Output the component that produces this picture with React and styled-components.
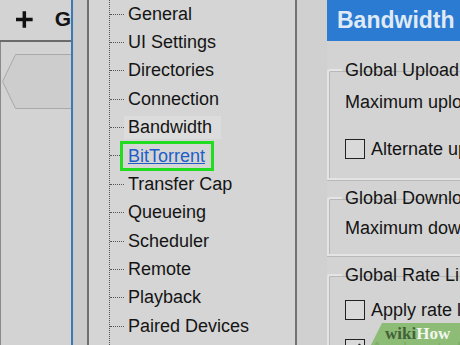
import React from 'react';
import styled, { createGlobalStyle } from 'styled-components';

const treeItems = [
  'General',
  'UI Settings',
  'Directories',
  'Connection',
  'Bandwidth',
  'BitTorrent',
  'Transfer Cap',
  'Queueing',
  'Scheduler',
  'Remote',
  'Playback',
  'Paired Devices',
];

const GlobalStyle = createGlobalStyle`
  html, body {
    margin: 0;
    padding: 0;
    background: #d3d3d3;
  }
  body {
    font-family: 'Liberation Sans', Arial, sans-serif;
  }
  * {
    box-sizing: border-box;
  }
`;

const Screen = styled.div`
  position: relative;
  display: flex;
  width: 460px;
  height: 345px;
  overflow: hidden;
  background: #d3d3d3;
  color: #141414;
`;

const MainPane = styled.div`
  display: flex;
  flex-direction: column;
  width: 71px;
  flex-shrink: 0;
  overflow: hidden;
`;

const Toolbar = styled.div`
  display: flex;
  align-items: center;
  gap: 22px;
  height: 42px;
  padding-left: 16px;
  padding-bottom: 2px;
  border-bottom: 2px solid #6b6b6b;
  font-weight: bold;
  font-size: 21px;
  white-space: nowrap;
`;

const TabStrip = styled.div`
  flex: 1;
  border-left: 1px solid #8a8a8a;
  padding-top: 12px;
`;

const Splitter = styled.div`
  width: 18px;
  flex-shrink: 0;
  background: #cbcbcb;
  border-left: 2px solid #3a78b8;
  border-right: 2px solid #6f6f6f;
`;

const TreePane = styled.ul`
  position: relative;
  width: 208px;
  flex-shrink: 0;
  margin: 0;
  padding: 0 0 0 20px;
  list-style: none;
  background: #d5d5d5;
  border-right: 2px solid #737373;

  &::before {
    content: '';
    position: absolute;
    left: 20px;
    top: 0;
    bottom: 0;
    border-left: 1px dotted #555;
  }
`;

const TreeItem = styled.li`
  display: flex;
  align-items: center;
  height: 28.36px;
  font-size: 18px;

  &::before {
    content: '';
    width: ${({ $state }) => ($state === 'link' ? '10px' : '14px')};
    margin-left: 1px;
    margin-right: ${({ $state }) => ($state === 'link' ? '0' : '4px')};
    border-top: 1px dotted #555;
  }
`;

const Label = styled.span`
  padding: 0 ${({ $state }) => ($state === 'selected' ? '9px' : '4px')} 1px 4px;
  margin-left: -4px;
  line-height: 22px;
  background: ${({ $state }) => ($state === 'selected' ? '#dcdcdc' : 'transparent')};
`;

const LinkLabel = styled.span`
  padding: 2px 6px 2px 5px;
  border: 3px solid #21dc21;
  color: #1d5ec9;
  text-decoration: underline;
  line-height: 20px;
`;

const Gutter = styled.div`
  width: 30px;
  flex-shrink: 0;
  background: #d0d0d0;
`;

const SettingsPane = styled.div`
  flex: 1;
  display: flex;
  flex-direction: column;
  white-space: nowrap;
  font-size: 18px;
  min-width: 0;
`;

const Header = styled.div`
  height: 41px;
  flex-shrink: 0;
  display: flex;
  align-items: center;
  padding-left: 10px;
  background: #2b7bd3;
  color: #dfeaf6;
  font-size: 23px;
  font-weight: bold;
`;

const Group = styled.fieldset`
  flex-shrink: 0;
  margin: ${({ $top }) => $top}px 0 0 0;
  padding: 0 0 ${({ $bottom }) => $bottom}px 16px;
  border: none;
  border-top: 2px solid #e4e4e4;
  border-left: 2px solid #e4e4e4;
  border-bottom: 2px solid #e4e4e4;
  box-shadow: inset 1px 1px 0 #b9b9b9, 0 1px 0 #b9b9b9;
  border-top-left-radius: 3px;

  & > legend {
    padding: 0 3px;
    margin-left: -3px;
    line-height: 20px;
  }
`;

const Row = styled.div`
  display: flex;
  align-items: center;
  gap: 6px;
  height: ${({ $h }) => $h}px;
`;

const Check = styled.span`
  width: 20px;
  height: 20px;
  flex-shrink: 0;
  border: 1px solid #222;
  background: #d9d9d9;
  display: flex;
  align-items: center;
  justify-content: center;
`;

const Badge = styled.div`
  position: absolute;
  z-index: 2;
  left: 370px;
  top: 323px;
  width: 96px;
  height: 24px;
  padding: 2px 0 0 15px;
  clip-path: polygon(12px 0, 100% 0, 100% 100%, 0 100%);
  border-top-left-radius: 10px;
  background: rgba(133, 186, 110, 0.92);
  font-family: 'Liberation Serif', 'DejaVu Serif', serif;
  font-weight: bold;
  font-size: 17px;
  line-height: 18px;
  white-space: nowrap;

  & b {
    color: #44603a;
  }
  & i {
    font-style: normal;
    color: #f2f6ee;
  }
`;

const App = () => {
  return (
    <>
      <GlobalStyle />
      <Screen>
        <MainPane>
          <Toolbar>
            <svg width="19" height="19" viewBox="0 0 19 19">
              <path d="M9.5 0v19M0 9.5h19" stroke="#111" strokeWidth="4" />
            </svg>
            <span>G</span>
          </Toolbar>
          <TabStrip>
            <svg width="70" height="57" viewBox="0 0 70 57">
              <path
                d="M72 0.5H14.5L1.5 27.5L14.5 54.5H72"
                fill="#cdcdcd"
                stroke="#a9a9a9"
                strokeWidth="1"
              />
            </svg>
          </TabStrip>
        </MainPane>
        <Splitter />
        <TreePane>
          {treeItems.map((name) => {
            const state =
              name === 'BitTorrent' ? 'link' : name === 'Bandwidth' ? 'selected' : 'plain';
            return (
              <TreeItem key={name} $state={state}>
                {state === 'link' ? (
                  <LinkLabel>{name}</LinkLabel>
                ) : (
                  <Label $state={state}>{name}</Label>
                )}
              </TreeItem>
            );
          })}
        </TreePane>
        <Gutter />
        <SettingsPane>
          <Header>Bandwidth</Header>
          <Group $top={19} $bottom={4}>
            <legend>Global Upload Rate Limiting</legend>
            <Row $h={44}>Maximum upload rate</Row>
            <Row $h={50}>
              <Check />
              Alternate upload rate when not downloading
            </Row>
          </Group>
          <Group $top={8} $bottom={6}>
            <legend>Global Download Rate Limiting</legend>
            <Row $h={40}>Maximum download rate</Row>
          </Group>
          <Group $top={9} $bottom={0}>
            <legend>Global Rate Limit Options</legend>
            <Row $h={50}>
              <Check />
              Apply rate limit to transport overhead
            </Row>
            <Row $h={28}>
              <Check>
                <svg width="14" height="14" viewBox="0 0 14 14">
                  <path d="M2 7l3 4 7-9" stroke="#222" strokeWidth="2" fill="none" />
                </svg>
              </Check>
              Apply rate limit to uTP connections
            </Row>
          </Group>
        </SettingsPane>
        <Badge>
          <b>wiki</b>
          <i>How</i>
        </Badge>
      </Screen>
    </>
  );
};

export default App;
